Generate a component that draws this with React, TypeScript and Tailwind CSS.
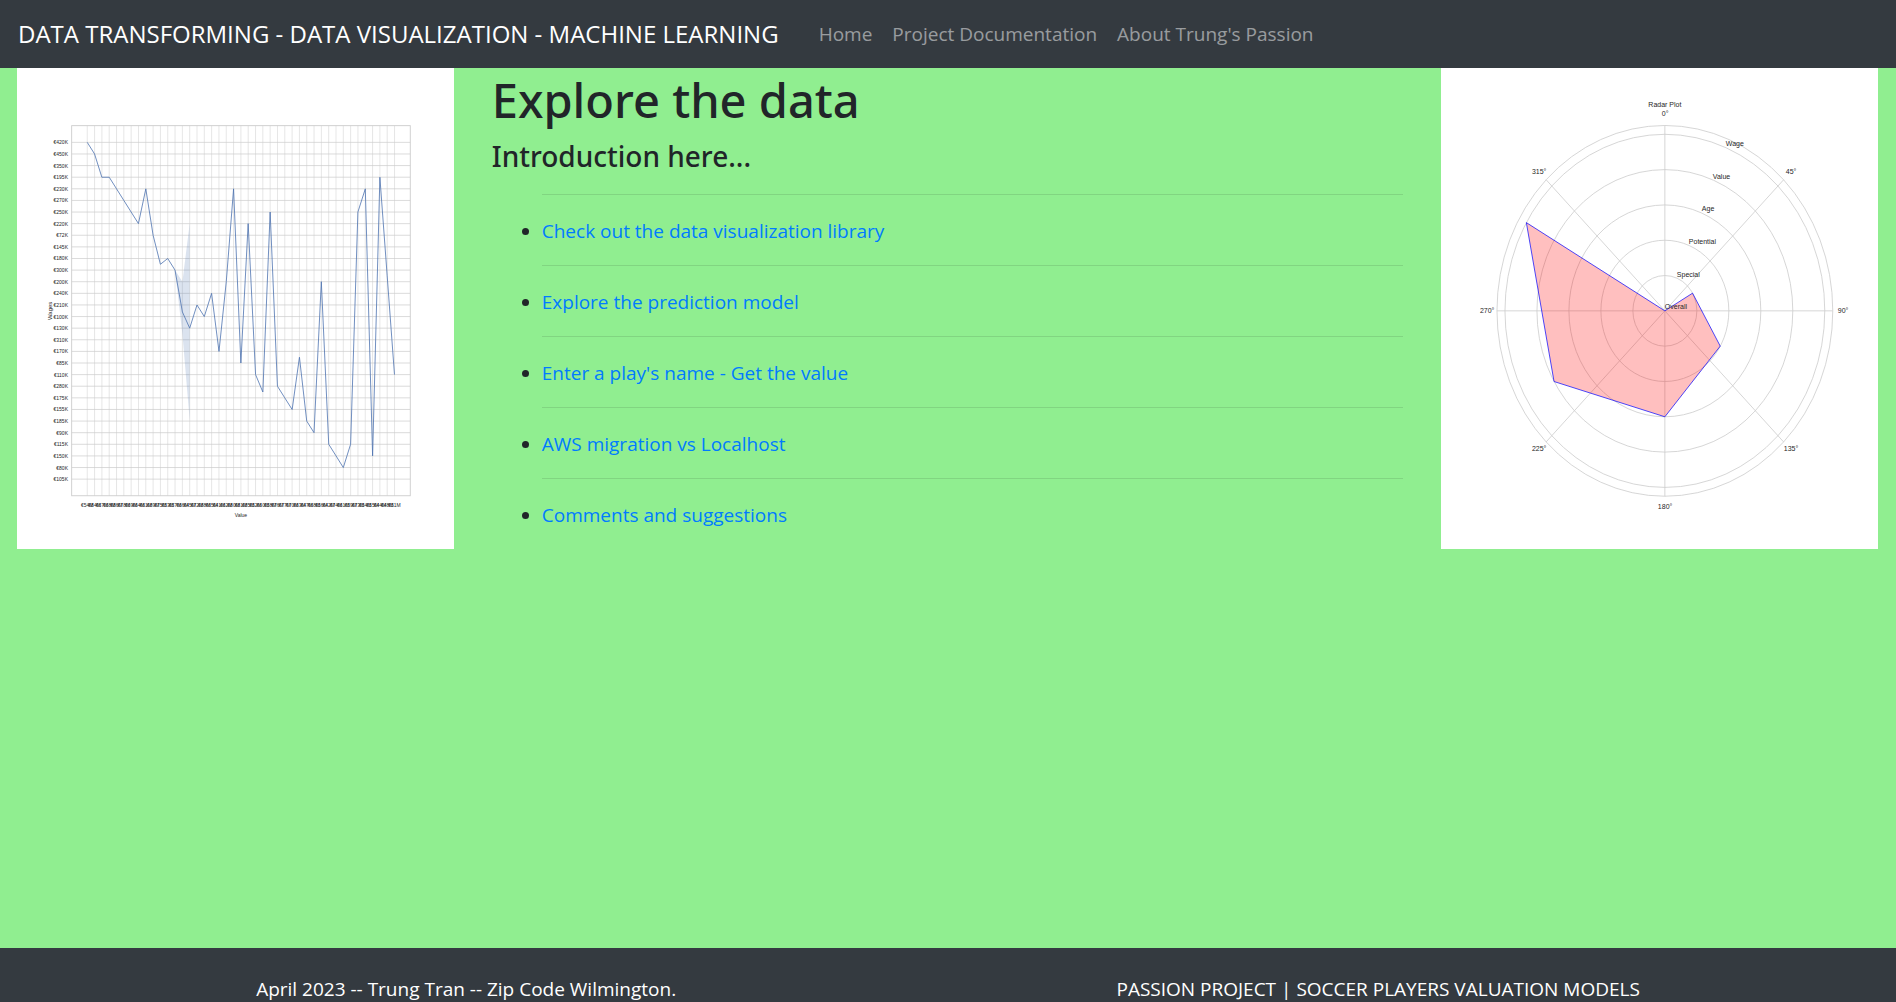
const NAV_LINKS = ["Home", "Project Documentation", "About Trung's Passion"];

const TOPICS = [
  "Check out the data visualization library",
  "Explore the prediction model",
  "Enter a play's name - Get the value",
  "AWS migration vs Localhost",
  "Comments and suggestions",
];

const WAGE_TICKS = [
  "€420K", "€450K", "€350K", "€195K", "€230K", "€270K", "€250K", "€220K", "€72K", "€145K",
  "€180K", "€300K", "€200K", "€240K", "€210K", "€100K", "€130K", "€310K", "€170K", "€85K",
  "€110K", "€280K", "€175K", "€155K", "€185K", "€90K", "€115K", "€150K", "€80K", "€105K",
];

const VALUE_TICKS = [
  "€54M", "€84M", "€67M", "€68M", "€86M", "€78M", "€69M", "€64M", "€61M", "€89M", "€75M",
  "€53M", "€57M", "€66M", "€45M", "€72M", "€88M", "€65M", "€41M", "€62M", "€80M", "€81M",
  "€85M", "€52M", "€60M", "€58M", "€76M", "€77M", "€70M", "€63M", "€47M", "€68M", "€56M",
  "€42M", "€74M", "€61M", "€59M", "€73M", "€54M", "€55M", "€44M", "€48M", "€51M",
];

/* Row of the wage axis that the line passes at each value tick. */
const WAGE_LINE = [
  0, 1, 3, 3, 4, 5, 6, 7, 4, 8, 10.5, 10, 11, 14.6, 16, 14, 15, 13, 18, 12, 4, 19, 7, 20, 21.5,
  6, 21, 22, 23, 18.5, 24, 25, 12, 26, 27, 28, 26, 6, 4, 27, 3, 11.5, 20,
];

const colX = (i: number) => 70.3 + i * 7.32;
const rowY = (r: number) => 74.4 + r * 11.62;
const toPoints = (list: number[][]) =>
  list.map(([i, r]) => `${colX(i).toFixed(1)},${rowY(r).toFixed(1)}`).join(" ");

function WageChart() {
  return (
    <svg
      viewBox="0 0 437 481"
      role="img"
      aria-label="Wages by value line chart"
      className="block h-auto w-full bg-white font-['Liberation_Sans',sans-serif]"
    >
      <g stroke="#cccccc" strokeWidth="0.7" fill="none">
        {VALUE_TICKS.map((_, i) => (
          <line key={i} x1={colX(i)} x2={colX(i)} y1="57.7" y2="428" strokeWidth="0.5" />
        ))}
        {WAGE_TICKS.map((_, r) => (
          <line key={r} x1="54.7" x2="393.5" y1={rowY(r)} y2={rowY(r)} />
        ))}
        <rect x="54.7" y="57.7" width="338.8" height="370.3" strokeWidth="0.9" />
      </g>
      <polygon
        points={toPoints([[12, 11], [13, 12], [14, 7], [14, 23.9], [13, 16.5]])}
        fill="#4c72b0"
        fillOpacity="0.2"
      />
      <polyline
        points={toPoints(WAGE_LINE.map((r, i) => [i, r]))}
        fill="none"
        stroke="#4c72b0"
        strokeWidth="0.8"
      />
      <g fill="#262626" fontSize="5">
        {WAGE_TICKS.map((label, r) => (
          <text key={label} x="51" y={rowY(r) + 2} textAnchor="end">
            {label}
          </text>
        ))}
        {VALUE_TICKS.map((label, i) => (
          <text key={i} x={colX(i)} y="439" textAnchor="middle">
            {label}
          </text>
        ))}
        <text x="224" y="449" textAnchor="middle">Value</text>
      </g>
      <text transform="rotate(-90 35 243)" x="35" y="243" textAnchor="middle" fill="#262626" fontSize="6">
        Wages
      </text>
    </svg>
  );
}

const CX = 224;
const CY = 243;
const RX = 32;
const RY = 35.33;

const polar = (deg: number, r: number) => {
  const a = (deg * Math.PI) / 180;
  return [CX + Math.sin(a) * RX * r, CY - Math.cos(a) * RY * r];
};

const ANGLE_LABELS: [string, number, number][] = [
  ["0°", 221, 48],
  ["45°", 345, 106],
  ["90°", 397, 245],
  ["135°", 343, 383],
  ["180°", 217, 441],
  ["225°", 91, 383],
  ["270°", 39, 245],
  ["315°", 91, 106],
];

const RING_LABELS: [string, number, number][] = [
  ["Wage", 285, 78],
  ["Value", 272, 111],
  ["Age", 261, 143],
  ["Potential", 248, 176],
  ["Special", 236, 209],
  ["Overall", 224, 241],
];

function RadarChart() {
  const shape = [0, 1, 2, 3, 4, 5]
    .map((k) => polar(k * 60, k).map((n) => n.toFixed(1)).join(","))
    .join(" ");
  return (
    <svg
      viewBox="0 0 437 481"
      role="img"
      aria-label="Radar plot"
      className="block h-auto w-full bg-white font-['Liberation_Sans',sans-serif]"
    >
      <g fill="none" stroke="#cccccc" strokeWidth="0.8">
        {[1, 2, 3, 4, 5, 5.25].map((r) => (
          <ellipse key={r} cx={CX} cy={CY} rx={RX * r} ry={RY * r} />
        ))}
        {[0, 45, 90, 135, 180, 225, 270, 315].map((deg) => {
          const [x, y] = polar(deg, 5.25);
          return <line key={deg} x1={CX} y1={CY} x2={x} y2={y} />;
        })}
      </g>
      <polygon points={shape} fill="#ff0000" fillOpacity="0.25" stroke="#0000ff" strokeOpacity="0.7" strokeWidth="1" />
      <g fill="#262626" fontSize="7">
        {ANGLE_LABELS.concat(RING_LABELS).map(([label, x, y]) => (
          <text key={label} x={x} y={y}>
            {label}
          </text>
        ))}
        <text x={CX} y="39" textAnchor="middle">Radar Plot</text>
      </g>
    </svg>
  );
}

export default function App() {
  return (
    <div className="flex min-h-screen flex-col bg-[#90ee90] font-['Open_Sans','Noto_Sans',sans-serif] text-[19px] leading-[30px] text-[#212529]">
      <nav className="flex min-h-[68px] flex-wrap items-center gap-10 bg-[#343a40] px-[18px]">
        <a href="#" className="text-[24px] text-white">
          DATA TRANSFORMING - DATA VISUALIZATION - MACHINE LEARNING
        </a>
        <div className="flex gap-5">
          {NAV_LINKS.map((label) => (
            <a key={label} href="#" className="text-white/50">
              {label}
            </a>
          ))}
        </div>
      </nav>

      <main className="grid flex-1 grid-cols-12 content-start gap-x-[38px] pr-[18px] pl-[17px]">
        <div className="col-span-3">
          <WageChart />
        </div>
        <section className="col-span-6">
          <h1 className="pt-1 font-['Noto_Sans',sans-serif] text-[47px] leading-[56px] font-medium">
            Explore the data
          </h1>
          <h3 className="mt-[10px] font-['Noto_Sans',sans-serif] text-[28px] leading-[37px] font-medium">
            Introduction here...
          </h3>
          <ul className="list-disc pl-[50px]">
            {TOPICS.map((topic) => (
              <div key={topic} className="contents">
                <hr className="mt-[19px] mb-[21px] border-t border-black/10" />
                <li>
                  <a href="#" className="text-[#007bff]">
                    {topic}
                  </a>
                </li>
              </div>
            ))}
          </ul>
        </section>
        <div className="col-span-3">
          <RadarChart />
        </div>
      </main>

      <footer className="flex flex-wrap justify-around bg-[#343a40] px-9 pt-7 leading-[26px] text-white">
        <p>April 2023 -- Trung Tran -- Zip Code Wilmington.</p>
        <p>PASSION PROJECT | SOCCER PLAYERS VALUATION MODELS</p>
      </footer>
    </div>
  );
}
